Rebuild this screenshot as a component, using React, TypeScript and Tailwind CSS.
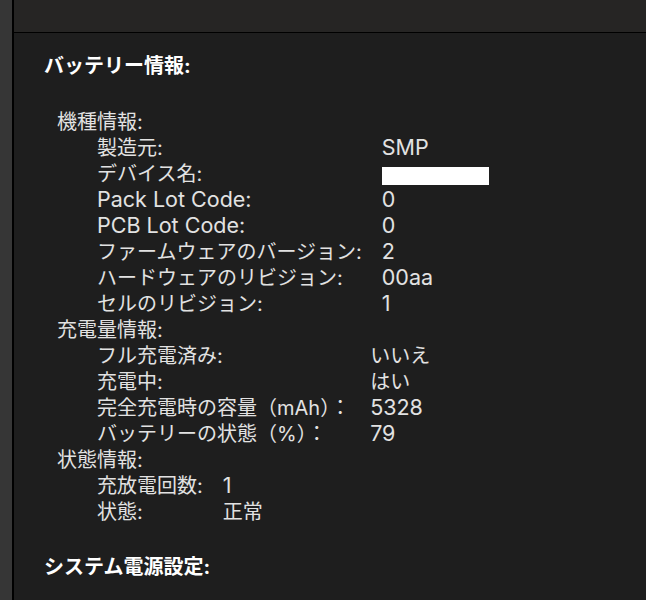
import React from 'react';

type Row = { label: React.ReactNode; value: React.ReactNode; key: string };

// Latin runs are set a little larger so they match the wider system face
const L = ({ children }: { children: React.ReactNode }) => <span className="text-[21.5px] leading-none">{children}</span>;

const groups: { title: string; rows: Row[] }[] = [
  {
    title: '機種情報:',
    rows: [
      { key: 'maker', label: '製造元:', value: <L>SMP</L> },
      { key: 'device', label: 'デバイス名:', value: <span className="inline-block w-[107px] h-[18px] bg-white align-middle" /> },
      { key: 'pack', label: <L>Pack Lot Code:</L>, value: <L>0</L> },
      { key: 'pcb', label: <L>PCB Lot Code:</L>, value: <L>0</L> },
      { key: 'fw', label: 'ファームウェアのバージョン:', value: <L>2</L> },
      { key: 'hw', label: 'ハードウェアのリビジョン:', value: <L>00aa</L> },
      { key: 'cell', label: 'セルのリビジョン:', value: <L>1</L> },
    ],
  },
  {
    title: '充電量情報:',
    rows: [
      { key: 'full', label: 'フル充電済み:', value: 'いいえ' },
      { key: 'charging', label: '充電中:', value: 'はい' },
      { key: 'cap', label: '完全充電時の容量（mAh）：', value: <L>5328</L> },
      { key: 'health', label: 'バッテリーの状態（%）：', value: <L>79</L> },
    ],
  },
  {
    title: '状態情報:',
    rows: [
      { key: 'cycles', label: '充放電回数:', value: <L>1</L> },
      { key: 'state', label: '状態:', value: '正常' },
    ],
  },
];

export default function App() {
  return (
    <div
      className="h-[600px] flex bg-[#1e1e1e] text-[#e2e2e2] overflow-hidden"
      style={{ fontFamily: 'Inter, "Noto Sans CJK JP", sans-serif' }}
    >
      {/* sidebar edge */}
      <div className="w-3 bg-[#363636]" />
      <div className="w-0.5 bg-black" />

      <div className="flex-1 flex flex-col">
        {/* top pane */}
        <div className="h-[33px] bg-[#262524] border-b border-black" />

        {/* detail pane */}
        <div className="pl-[30px] pt-5 text-[20px] leading-[26px]">
          <div className="font-bold text-white">バッテリー情報:</div>

          <div className="mt-[30px] pl-[13px]">
            {groups.map((g) => (
              <div key={g.title}>
                <div className="h-[26px]">{g.title}</div>
                <div className="grid grid-cols-[auto_1fr] auto-rows-[26px] gap-x-5 pl-10">
                  {g.rows.map((r) => (
                    <React.Fragment key={r.key}>
                      <div className="whitespace-nowrap overflow-hidden">{r.label}</div>
                      <div className="whitespace-nowrap overflow-hidden">{r.value}</div>
                    </React.Fragment>
                  ))}
                </div>
              </div>
            ))}
          </div>

          <div className="mt-[29px] font-bold text-white">システム電源設定:</div>
        </div>
      </div>
    </div>
  );
}
